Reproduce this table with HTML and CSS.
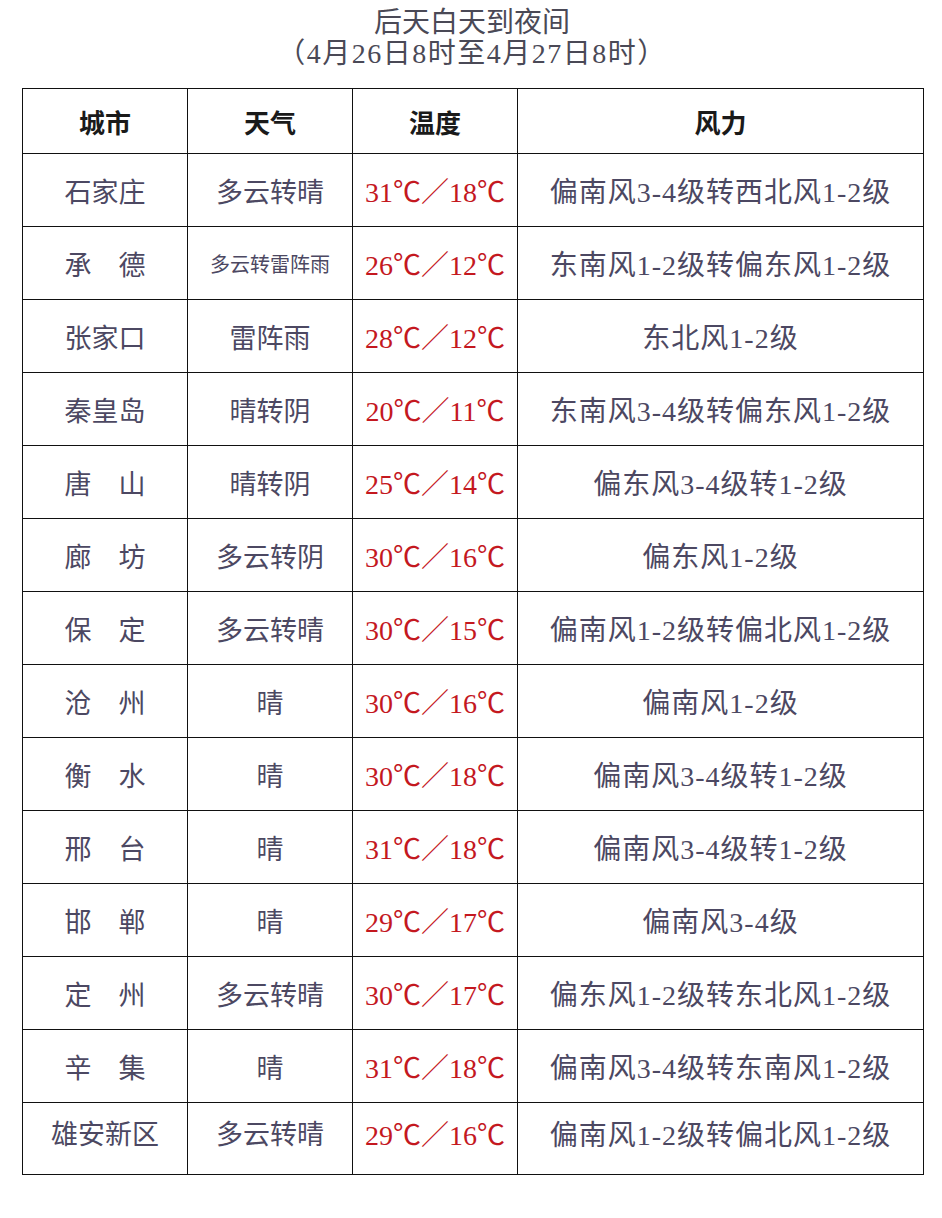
FILE: index.html
```html
<!DOCTYPE html>
<html lang="zh-CN">
<head>
<meta charset="utf-8">
<title>后天白天到夜间</title>
<link rel="stylesheet" href="styles.css">
</head>
<body>
<div class="page">
  <h1 class="title">
    <span class="line">后天白天到夜间</span>
    <span class="line sub">（4月26日8时至4月27日8时）</span>
  </h1>
  <table class="forecast">
    <colgroup>
      <col class="c-city"><col class="c-wx"><col class="c-temp"><col class="c-wind">
    </colgroup>
    <thead>
      <tr><th>城市</th><th>天气</th><th>温度</th><th>风力</th></tr>
    </thead>
    <tbody>
      <tr><td>石家庄</td><td>多云转晴</td><td class="temp">31℃／18℃</td><td class="wind">偏南风3-4级转西北风1-2级</td></tr>
      <tr><td>承　德</td><td class="small">多云转雷阵雨</td><td class="temp">26℃／12℃</td><td class="wind">东南风1-2级转偏东风1-2级</td></tr>
      <tr><td>张家口</td><td>雷阵雨</td><td class="temp">28℃／12℃</td><td class="wind">东北风1-2级</td></tr>
      <tr><td>秦皇岛</td><td>晴转阴</td><td class="temp">20℃／11℃</td><td class="wind">东南风3-4级转偏东风1-2级</td></tr>
      <tr><td>唐　山</td><td>晴转阴</td><td class="temp">25℃／14℃</td><td class="wind">偏东风3-4级转1-2级</td></tr>
      <tr><td>廊　坊</td><td>多云转阴</td><td class="temp">30℃／16℃</td><td class="wind">偏东风1-2级</td></tr>
      <tr><td>保　定</td><td>多云转晴</td><td class="temp">30℃／15℃</td><td class="wind">偏南风1-2级转偏北风1-2级</td></tr>
      <tr><td>沧　州</td><td>晴</td><td class="temp">30℃／16℃</td><td class="wind">偏南风1-2级</td></tr>
      <tr><td>衡　水</td><td>晴</td><td class="temp">30℃／18℃</td><td class="wind">偏南风3-4级转1-2级</td></tr>
      <tr><td>邢　台</td><td>晴</td><td class="temp">31℃／18℃</td><td class="wind">偏南风3-4级转1-2级</td></tr>
      <tr><td>邯　郸</td><td>晴</td><td class="temp">29℃／17℃</td><td class="wind">偏南风3-4级</td></tr>
      <tr><td>定　州</td><td>多云转晴</td><td class="temp">30℃／17℃</td><td class="wind">偏东风1-2级转东北风1-2级</td></tr>
      <tr><td>辛　集</td><td>晴</td><td class="temp">31℃／18℃</td><td class="wind">偏南风3-4级转东南风1-2级</td></tr>
      <tr class="last"><td>雄安新区</td><td>多云转晴</td><td class="temp">29℃／16℃</td><td class="wind">偏南风1-2级转偏北风1-2级</td></tr>
    </tbody>
  </table>
</div>
</body>
</html>
```

FILE: styles.css
```css
html, body {
  margin: 0;
  padding: 0;
  background: #ffffff;
}

.page {
  width: 942px;
  height: 1218px;
  padding: 7px 0 0 22px;
  box-sizing: border-box;
  font-family: "Liberation Serif", "Noto Sans CJK SC", serif;
}

.title {
  margin: 0 0 19px 0;
  width: 900px;
  font-weight: normal;
  font-size: 28px;
  line-height: 31px;
  color: #4a4956;
  text-align: center;
  display: flex;
  flex-direction: column;
  align-items: center;
}

.title .line {
  display: block;
}

.title .sub {
  letter-spacing: 1.5px;
}

.forecast {
  border-collapse: collapse;
  width: 901px;
  table-layout: fixed;
}

.c-city, .c-wx, .c-temp { width: 165px; }
.c-wind { width: 406px; }

.forecast th,
.forecast td {
  border: 1.5px solid #111;
  text-align: center;
  vertical-align: middle;
  padding: 0;
  white-space: nowrap;
}

.forecast th {
  height: 64px;
  font-size: 26px;
  font-weight: 600;
  color: #1a1a1a;
}

.forecast td {
  height: 72px;
  font-size: 27px;
  color: #4c4862;
}

.forecast td.wind {
  font-size: 28px;
  letter-spacing: 1px;
}

.forecast td.small {
  font-family: "Noto Sans CJK SC", sans-serif;
  font-size: 20px;
}

.forecast td.temp {
  color: #c4181f;
  font-size: 28px;
}

.forecast tr.last td {
  vertical-align: top;
  padding-top: 10px;
  box-sizing: border-box;
}
```
